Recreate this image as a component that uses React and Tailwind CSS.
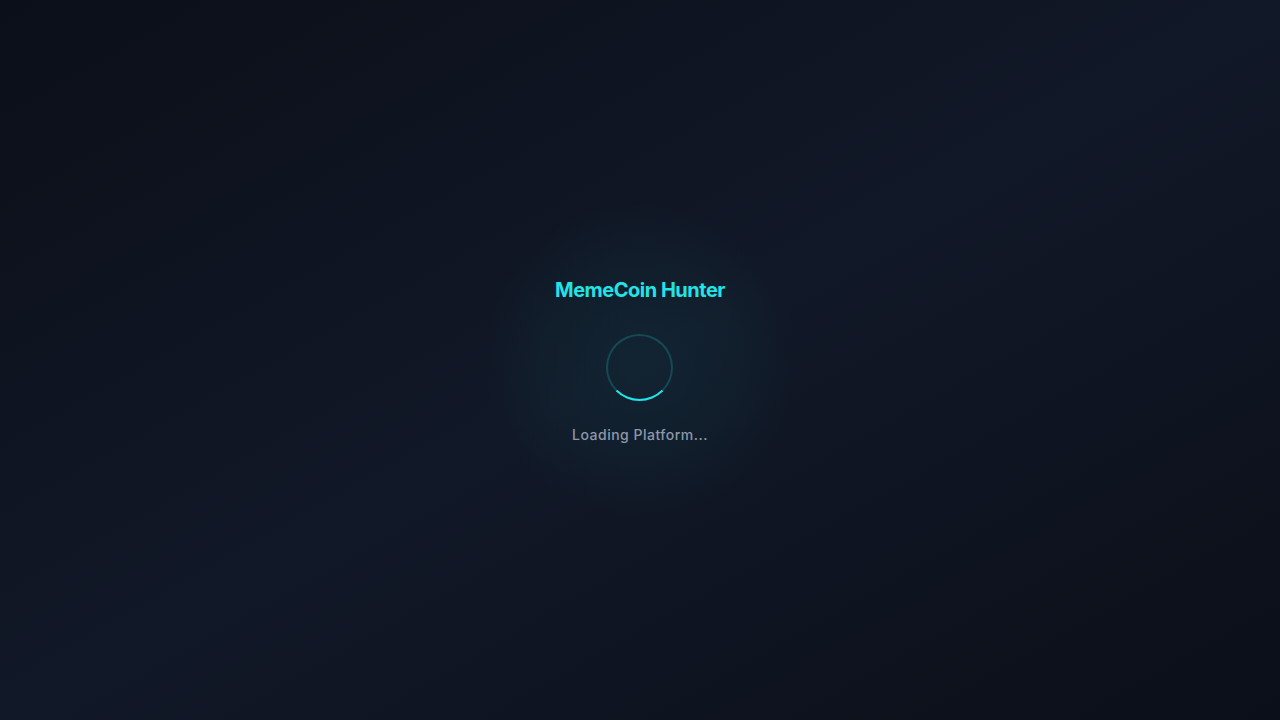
export default function App() {
    return (
        <div className="relative min-h-screen w-full overflow-hidden bg-gradient-to-br from-[#0b0f19] via-[#111827] to-[#0b0f19] font-['Inter',sans-serif]">
            <div className="flex min-h-screen items-center justify-center">
                <div className="relative flex flex-col items-center">
                    <div className="pointer-events-none absolute left-1/2 top-1/2 h-[320px] w-[320px] -translate-x-1/2 -translate-y-1/2 rounded-full bg-[radial-gradient(circle,rgba(34,227,230,0.06)_0%,rgba(34,227,230,0.03)_45%,transparent_70%)]" />
                    <h1 className="relative text-xl font-bold tracking-tight leading-7 text-[#22e3e6]">
                        MemeCoin Hunter
                    </h1>
                    <div className="relative mt-[30px] h-[67px] w-[67px] rounded-full border-2 border-[#22e3e6]/20 border-b-[#22e3e6]" />
                    <p className="relative mt-6 text-sm font-medium leading-5 tracking-[0.035em] text-[#8e98aa]">
                        Loading Platform...
                    </p>
                </div>
            </div>
        </div>
    );
}
